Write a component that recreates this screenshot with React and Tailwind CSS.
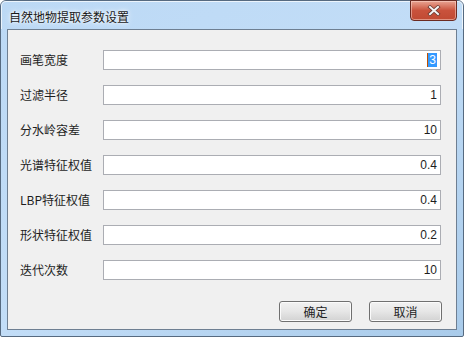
const rows = [
  { label: '画笔宽度', value: '3', selected: true },
  { label: '过滤半径', value: '1' },
  { label: '分水岭容差', value: '10' },
  { label: '光谱特征权值', value: '0.4' },
  { label: 'LBP特征权值', value: '0.4' },
  { label: '形状特征权值', value: '0.2' },
  { label: '迭代次数', value: '10' },
];

const App = () => {
  return (
    <div className="w-[464px] h-[337px] bg-white" style={{ fontFamily: '"Liberation Sans", "Noto Sans CJK SC", sans-serif' }}>
      <div className="w-[464px] h-[337px] border border-[#566a80] rounded-t-[6px] rounded-b-[2px] bg-gradient-to-br from-[#bcd9f5] via-[#c2ddf7] to-[#a9cbea] flex flex-col relative">
        {/* title bar */}
        <div className="h-[28px] flex items-center pl-[7px] shrink-0 border-t border-l border-r border-white/70 rounded-t-[5px]">
          <span className="text-[12px] text-[#1a1a1a] leading-none pt-[3px] [text-shadow:0_0_6px_#ffffff,0_0_3px_#ffffff]" style={{ fontFamily: '"Noto Sans CJK SC", sans-serif' }}>
            自然地物提取参数设置
          </span>
        </div>

        {/* close button */}
        <div className="absolute top-[-1px] right-[6px] w-[47px] h-[21px] rounded-b-[4px] border border-[#6b2b22] bg-gradient-to-b from-[#e8a493] via-[#c9523c] to-[#c04a33] flex items-center justify-center shadow-[inset_0_0_0_1px_rgba(255,220,210,0.5)]">
          <svg width="14" height="11" viewBox="0 0 14 11">
            <path d="M3 2 L11 9 M11 2 L3 9" stroke="#6a3a32" strokeWidth="3.6" strokeLinecap="square" />
            <path d="M3 2 L11 9 M11 2 L3 9" stroke="#f4f4f4" strokeWidth="2" strokeLinecap="square" />
          </svg>
        </div>

        {/* client area */}
        <div className="mx-[6px] h-[301px] border border-[#6e7f92] bg-[#f0f0f0] flex flex-col pt-[20px] pl-[12px]">
          <div className="flex flex-col gap-[15px]">
            {rows.map((r) => (
              <div key={r.label} className="flex items-center h-[20px]">
                <div className="w-[83px] text-[12px] text-[#1e1e1e] leading-none" style={{ fontFamily: '"Noto Sans CJK SC", sans-serif' }}>
                  {r.label}
                </div>
                <div className="w-[338px] h-[20px] border border-[#abadb3] bg-white flex items-center justify-end pr-[3px]">
                  {r.selected ? (
                    <span className="text-[12px] leading-[14px] bg-[#3399ff] text-white px-[1px] border-l border-[#c05000]">{r.value}</span>
                  ) : (
                    <span className="text-[12px] leading-none text-[#1e1e1e]">{r.value}</span>
                  )}
                </div>
              </div>
            ))}
          </div>

          <div className="flex mt-[21px] pl-[259px] gap-[17px]">
            <button className="w-[73px] h-[21px] rounded-[3px] border border-[#707070] bg-gradient-to-b from-[#f2f2f2] via-[#e6e6e6] to-[#d2d2d2] text-[12px] text-[#1e1e1e] leading-none shadow-[inset_0_0_0_1px_#fbfbfb]" style={{ fontFamily: '"Noto Sans CJK SC", sans-serif' }}>
              确定
            </button>
            <button className="w-[73px] h-[21px] rounded-[3px] border border-[#707070] bg-gradient-to-b from-[#f2f2f2] via-[#e6e6e6] to-[#d2d2d2] text-[12px] text-[#1e1e1e] leading-none shadow-[inset_0_0_0_1px_#fbfbfb]" style={{ fontFamily: '"Noto Sans CJK SC", sans-serif' }}>
              取消
            </button>
          </div>
        </div>
      </div>
    </div>
  );
};

export default App;
